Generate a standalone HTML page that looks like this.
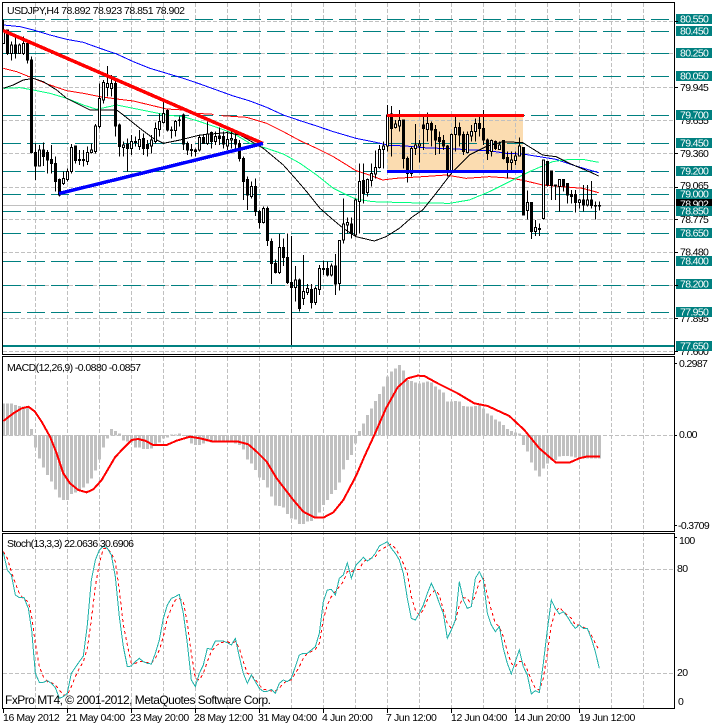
<!DOCTYPE html>
<html>
<head>
<meta charset="utf-8">
<style>
html,body{margin:0;padding:0;background:#fff;width:712px;height:725px;overflow:hidden}
svg{display:block}
text{font-family:"Liberation Sans",sans-serif;font-size:10.5px;fill:#000}
.ax{letter-spacing:-.65px}
.lb{letter-spacing:-.65px;fill:#fff}
.dt{letter-spacing:-.4px}
.tl{stroke:#008080;stroke-width:1;stroke-dasharray:18 6;fill:none}
.w{stroke:#000;stroke-width:3;fill:none}
.bk{stroke:#000;stroke-width:3;fill:#000}
.wh{stroke:#000;stroke-width:3;fill:#fff}
.ma{fill:none;stroke-width:3;stroke-linejoin:round;shape-rendering:crispEdges}
</style>
</head>
<body>
<svg width="712" height="725" viewBox="0 0 712 725" xmlns="http://www.w3.org/2000/svg">
<rect width="712" height="725" fill="#fff"/>

<!-- orange rectangle -->
<rect x="387" y="115" width="136" height="56" fill="#fbdcb0"/>

<!-- grid -->
<g shape-rendering="crispEdges" fill="none" stroke="#c0c0c0" stroke-dasharray="4 2">
<path d="M35.5 3V708M67.5 3V708M99.5 3V708M131.5 3V708M163.5 3V708M195.5 3V708M227.5 3V708M259.5 3V708M291.5 3V708M323.5 3V708M355.5 3V708M387.5 3V708M419.5 3V708M451.5 3V708M483.5 3V708M515.5 3V708M547.5 3V708M579.5 3V708M611.5 3V708M643.5 3V708"/>
<path d="M3 21.5H674M3 53.5H674M3 87.5H674M3 120.5H674M3 153.5H674M3 187.5H674M3 219.5H674M3 252.5H674M3 285.5H674M3 318.5H674M3 351.5H674M3 435.5H674M3 569.5H674M3 673.5H674"/>
</g>
<path d="M3 205.5H674" stroke="#c0c0c0" stroke-width="1" shape-rendering="crispEdges"/>

<!-- teal level lines -->
<g shape-rendering="crispEdges">
<path class="tl" d="M3 19.5H670M3 31.5H670M3 53.5H670M3 76.5H670M3 115.5H670M3 143.5H670M3 171.5H670M3 194.5H670M3 211.5H670M3 233.5H670M3 261.5H670M3 285.5H670M3 312.5H670"/>
<rect x="3" y="345" width="671" height="2" fill="#008080"/>
</g>

<!-- moving averages left -->
<g transform="scale(.33333)">
<polyline class="ma" stroke="#0000ff" points="10,75 60,80 100,90 150,105 200,118 250,127 300,145 350,162 400,185 450,205 500,220 550,235 600,252 650,270 700,288 750,303 800,322 850,345 900,362 950,378 1000,395 1068,415 1118,425 1168,436 1218,438 1268,443 1318,445 1368,447 1418,450 1468,452 1518,460 1568,462 1618,470 1668,478 1718,495 1768,510 1796,518"/>
<polyline class="ma" stroke="#ff0000" points="10,205 50,215 100,235 150,255 200,272 250,280 300,290 350,297 400,303 450,315 500,327 550,330 590,340 640,343"/>
<polyline class="ma" stroke="#ff0000" points="665,347 740,352 800,370 850,395 900,422 950,445 1000,470 1068,512 1108,525 1148,540 1188,535 1268,530 1338,525 1398,535 1468,530 1538,535 1578,543 1628,555 1688,560 1748,565 1796,578"/>
<polyline class="ma" stroke="#00ff7f" points="10,265 60,263 100,270 150,280 200,295 250,315 290,328 350,315 400,325 450,335 500,345 550,350 600,365 650,382 700,400 750,430 800,445 850,462 900,490 950,525 1000,565 1040,585 1068,597 1118,605 1218,608 1348,610 1408,600 1468,575 1538,540 1588,515 1658,485 1708,478 1748,478 1796,487"/>
<polyline class="ma" stroke="#000" points="10,265 40,255 70,240 100,235 130,245 170,270 200,295 240,315 270,330 350,330 370,345 420,385 460,415 490,430 540,420 600,405 680,398 720,405 790,445 850,495 890,540 920,575 960,625 1000,660 1030,685 1068,710 1123,723 1158,710 1198,685 1238,650 1268,630 1308,580 1358,515 1408,465 1458,440 1508,425 1568,428 1628,465 1668,470 1708,490 1768,515 1796,528"/>
</g>

<!-- candles left -->
<g transform="translate(.17,0) scale(.33333)" shape-rendering="crispEdges">
<path class="w" d="M10 60V130M22 90V165M34 125V182M46 110V175M58 130V160M70 110V165M82 120V190M94 170V460M106 430V540M118 435V500M130 428V498M142 450V520M154 435V520M166 470V575M178 535V590M190 515V555M202 505V545M214 432V520M226 436V490M238 450V495M250 450V500M262 440V495M274 430V460M286 372V460M298 250V385M310 240V310M322 198V290M334 225V290M346 240V410M358 370V470M370 425V470M382 415V515M394 405V465M406 410V440M418 390V450M430 400V465M442 420V470M454 405V460M466 368V430M478 340V410M490 305V370M502 328V395M514 380V415M526 360V410M538 350V380M550 340V450M562 425V465M574 432V470M586 445V470M598 405V455M610 405V430M622 365V435M634 395V445M646 395V435M658 382V435M670 395V445M682 395V450M694 390V445M706 395V450M718 420V485M730 470V600M742 530V630M754 545V595M766 535V648M778 630V685M790 620V670M802 620V738M814 715V852M826 778V820M838 702V822M850 715V798M862 700V852M874 708V1035M886 798V905M898 835V935M910 765V915M922 852V885M934 852V925M946 860V915M958 795V885M970 782V825M982 785V830M994 790V830M1006 762V885M1018 720V872M1030 595V730M1042 652V700M1054 652V715M1066 595V710"/>
<path class="bk" d="M19 90h6V160h-6zM43 135h6V160h-6zM79 130h6V180h-6zM91 180h6V458h-6zM103 458h6V498h-6zM127 450h6V470h-6zM139 458h6V480h-6zM151 478h6V490h-6zM163 490h6V545h-6zM175 538h6V585h-6zM223 438h6V482h-6zM235 478h6V482h-6zM247 478h6V482h-6zM343 250h6V378h-6zM355 375h6V440h-6zM379 432h6V445h-6zM427 416h6V445h-6zM439 434h6V445h-6zM499 332h6V390h-6zM511 390h6V392h-6zM547 345h6V432h-6zM559 430h6V450h-6zM571 448h6V452h-6zM583 450h6V455h-6zM607 412h6V430h-6zM631 398h6V425h-6zM655 408h6V415h-6zM667 410h6V432h-6zM703 418h6V432h-6zM715 430h6V475h-6zM727 475h6V545h-6zM739 538h6V585h-6zM763 560h6V635h-6zM775 635h6V668h-6zM799 625h6V722h-6zM811 725h6V790h-6zM823 790h6V818h-6zM847 742h6V772h-6zM859 772h6V848h-6zM871 848h6V862h-6zM895 840h6V925h-6zM931 868h6V908h-6zM967 805h6V808h-6zM979 805h6V825h-6zM1003 798h6V852h-6zM1051 672h6V700h-6z"/>
<path class="wh" d="M7 90h6V130h-6zM31 135h6V160h-6zM55 135h6V160h-6zM67 130h6V160h-6zM115 450h6V498h-6zM187 535h6V550h-6zM199 514h6V538h-6zM211 442h6V514h-6zM259 458h6V485h-6zM271 450h6V458h-6zM283 378h6V455h-6zM295 295h6V380h-6zM307 248h6V300h-6zM319 250h6V262h-6zM331 250h6V265h-6zM367 435h6V442h-6zM391 424h6V445h-6zM403 424h6V428h-6zM415 418h6V440h-6zM451 420h6V438h-6zM463 385h6V425h-6zM475 365h6V388h-6zM487 340h6V368h-6zM523 365h6V392h-6zM535 360h6V362h-6zM595 412h6V450h-6zM619 402h6V430h-6zM643 410h6V425h-6zM679 418h6V438h-6zM691 415h6V420h-6zM751 560h6V590h-6zM787 625h6V668h-6zM835 742h6V818h-6zM883 840h6V862h-6zM907 875h6V895h-6zM919 865h6V878h-6zM943 865h6V908h-6zM955 805h6V868h-6zM991 798h6V825h-6zM1015 722h6V850h-6zM1027 672h6V720h-6zM1039 668h6V675h-6zM1063 600h6V705h-6z"/>
</g>

<!-- candles right -->
<g transform="translate(356.17,0) scale(.33333)" shape-rendering="crispEdges">
<path class="w" d="M10 490V700M22 490V610M34 535V590M46 490V560M58 452V535M70 435V505M82 425V505M94 315V455M106 318V470M118 360V385M130 330V395M142 358V505M154 470V548M166 440V530M178 372V465M190 420V488M202 350V450M214 338V425M226 365V440M238 375V465M250 395V462M262 405V450M274 435V530M286 400V522M298 348V455M310 368V440M322 395V465M334 395V460M346 375V425M358 355V425M370 350V410M382 330V435M394 415V480M406 418V470M418 422V450M430 425V450M442 420V478M454 455V535M466 455V515M478 455V495M490 412V470M502 442V645M514 572V658M526 608V717M538 660V708M550 670V708M562 478V658M574 485V560M586 513V600M598 555V600M610 538V635M622 538V575M634 550V610M646 570V610M658 570V638M670 597V625M682 555V635M694 555V620M706 543V625M718 605V658M730 605V632"/>
<path class="bk" d="M19 542h6V580h-6zM103 342h6V385h-6zM139 360h6V475h-6zM151 475h6V520h-6zM199 375h6V385h-6zM223 370h6V390h-6zM235 388h6V420h-6zM247 412h6V425h-6zM259 422h6V438h-6zM271 438h6V518h-6zM307 382h6V405h-6zM319 403h6V455h-6zM367 370h6V385h-6zM379 385h6V420h-6zM391 420h6V460h-6zM415 425h6V445h-6zM439 422h6V475h-6zM451 472h6V488h-6zM499 442h6V645h-6zM523 608h6V695h-6zM547 685h6V688h-6zM571 485h6V555h-6zM583 513h6V557h-6zM595 555h6V558h-6zM619 538h6V558h-6zM631 550h6V585h-6zM643 583h6V590h-6zM655 583h6V608h-6zM679 600h6V615h-6zM703 600h6V617h-6zM715 616h6V618h-6zM727 616h6V618h-6z"/>
<path class="wh" d="M7 545h6V605h-6zM31 538h6V578h-6zM43 520h6V542h-6zM55 502h6V522h-6zM67 448h6V502h-6zM79 438h6V448h-6zM91 345h6V438h-6zM115 372h6V382h-6zM127 362h6V378h-6zM163 445h6V520h-6zM175 435h6V445h-6zM187 432h6V438h-6zM211 370h6V388h-6zM283 403h6V518h-6zM295 382h6V403h-6zM331 403h6V458h-6zM343 395h6V408h-6zM355 370h6V395h-6zM403 422h6V455h-6zM427 435h6V448h-6zM463 480h6V488h-6zM475 468h6V482h-6zM487 438h6V468h-6zM511 608h6V632h-6zM535 682h6V695h-6zM559 480h6V655h-6zM607 538h6V560h-6zM667 600h6V608h-6zM691 600h6V615h-6z"/>
</g>

<!-- trend lines -->
<g fill="none" shape-rendering="crispEdges">
<path d="M3 30.5L263 143.5" stroke="#ff0000" stroke-width="3.5"/>
<path d="M59 193.5L263 143.5" stroke="#0000ff" stroke-width="3.5"/>
<rect x="387" y="114" width="137" height="3" fill="#ff0000" stroke="none"/>
<rect x="387" y="170" width="136" height="3" fill="#0000ff" stroke="none"/>
</g>

<!-- MACD histogram -->
<g transform="translate(.17,350) scale(.33333)" shape-rendering="crispEdges">
<path fill="none" stroke="#c0c0c0" stroke-width="9" d="M10 257V160M22 257V160M34 257V160M46 257V165M58 257V168M70 257V170M82 257V172M94 257V237M106 255V292M118 255V325M130 255V352M142 255V375M154 255V395M166 255V418M178 255V442M190 255V450M202 255V450M214 255V432M226 255V428M238 255V420M250 255V412M262 255V400M274 255V385M286 255V362M298 255V328M310 255V292M322 255V265M334 257V237M346 257V243M358 257V250M370 255V272M382 255V275M394 255V278M406 255V292M418 255V292M430 255V297M442 255V297M454 255V295M466 255V285M478 255V278M490 255V265M502 255V262M514 257V253M526 257V253M538 257V250M550 255V258M562 255V265M574 255V280M586 255V285M598 255V285M610 255V280M622 255V275M634 255V278M646 255V278M658 255V275M670 255V275M682 255V275M694 255V278M706 255V280M718 255V285M730 255V298M742 255V328M754 255V340M766 255V360M778 255V382M790 255V390M802 255V412M814 255V440M826 255V466M838 255V468M850 255V472M862 255V492M874 255V505M886 255V508M898 255V522M910 255V522M922 255V515M934 255V513M946 255V500M958 255V488M970 255V465M982 255V450M994 255V432M1006 255V420M1018 255V397M1030 255V358M1042 255V330M1054 255V315M1066 255V280"/>
<path fill="none" stroke="#c0c0c0" stroke-width="9" transform="translate(1068,0)" d="M10 257V243M22 257V220M34 257V195M46 257V175M58 257V153M70 257V132M82 257V110M94 257V80M106 257V65M118 257V55M130 257V45M142 257V62M154 257V90M166 257V93M178 257V97M190 257V100M202 257V98M214 257V95M226 257V98M238 257V110M250 257V118M262 257V128M274 257V155M286 257V155M298 257V153M310 257V155M322 257V168M334 257V170M346 257V170M358 257V168M370 257V165M382 257V175M394 257V190M406 257V197M418 257V208M430 257V215M442 257V225M454 257V237M466 257V243M478 257V248M490 257V250M502 255V285M514 255V305M526 255V338M538 255V362M550 255V380M562 255V355M574 255V340M586 255V330M598 255V330M610 255V320M622 255V318M634 255V318M646 255V320M658 255V322M670 255V322M682 255V325M694 255V325M706 255V325M718 255V325M730 255V325"/>
</g>
<g transform="translate(0,350) scale(.33333)">
<polyline class="ma" stroke="#ff0000" style="stroke-width:6" points="10,213 40,190 65,175 85,170 105,185 125,215 150,260 170,310 190,370 210,400 235,420 260,427 280,418 305,390 345,322 370,295 395,270 415,267 435,272 460,285 500,285 530,272 570,260 600,265 640,275 715,275 745,283 770,305 800,335 830,385 880,450 910,485 945,503 970,503 1000,487 1030,450 1068,378 1093,320 1123,255 1158,175 1193,112 1223,85 1253,77 1273,78 1313,100 1373,130 1423,160 1463,168 1528,198 1573,240 1618,295 1668,338 1708,338 1738,325 1758,320 1800,320"/>
</g>

<!-- Stochastic -->
<g transform="translate(0,530) scale(.33333)" shape-rendering="crispEdges">
<polyline fill="none" stroke="#ff0000" stroke-width="3" stroke-dasharray="9 9" points="10,65 22,85 34,125 46,160 58,190 72,208 85,215 95,260 106,340 118,410 130,440 142,455 154,458 166,465 178,480 190,495 202,495 214,470 226,440 238,415 250,395 262,355 274,270 286,170 298,100 310,55 322,55 334,70 346,95 358,180 370,285 382,345 394,400 406,400 418,395 430,395 442,398 454,400 466,385 478,360 490,320 502,265 514,235 526,210 538,205 550,215 562,280 574,370 586,445 598,450 610,430 622,395 634,365 646,350 660,338 682,335 694,340 706,335 718,355 730,395 742,430 754,435 766,448 778,465 790,478 802,480 814,483 826,483 838,475 850,460 862,452 874,450 886,430 898,410 910,385 922,370 934,365 946,358 958,340 970,270 982,225 994,200 1006,185 1018,170 1030,155 1042,125 1054,125 1068,118 1078,118 1090,95 1102,88 1114,85 1126,80 1138,62 1162,48 1174,42 1186,55 1198,75 1210,100 1222,130 1234,200 1246,240 1258,255 1270,240 1282,210 1294,190 1306,180 1318,195 1330,240 1342,280 1354,295 1366,275 1378,225 1390,203 1402,205 1414,225 1426,195 1438,155 1450,145 1462,195 1474,240 1486,280 1498,290 1510,320 1522,365 1534,400 1546,410 1558,395 1570,395 1582,420 1594,450 1606,475 1618,480 1630,445 1642,370 1654,285 1666,245 1678,232 1690,245 1702,255 1714,265 1726,285 1738,285 1750,292 1762,298 1774,315 1786,340 1798,362"/>
<polyline fill="none" stroke="#20b2aa" stroke-width="3" points="10,68 22,120 34,135 46,195 58,203 72,203 85,235 95,300 106,430 118,457 130,457 142,452 154,460 166,473 178,505 190,500 202,490 214,430 226,412 238,395 250,378 262,285 274,150 286,90 298,60 310,48 322,55 334,75 346,140 358,260 370,350 382,410 394,408 406,395 418,385 430,395 442,400 454,402 466,370 478,330 490,265 502,225 514,205 526,200 538,193 550,250 562,340 574,450 586,470 598,430 610,405 622,355 634,358 646,333 670,333 682,338 694,345 706,325 718,380 730,430 742,460 754,435 766,455 778,475 790,484 802,484 814,478 826,490 838,460 850,450 862,455 874,445 886,410 898,375 910,370 922,370 934,360 946,350 958,310 970,215 982,180 994,178 1006,195 1018,145 1030,135 1042,98 1054,145 1068,105 1078,95 1090,82 1102,93 1114,85 1126,70 1138,48 1162,35 1174,55 1186,70 1198,90 1210,130 1222,205 1234,265 1246,270 1258,250 1270,225 1282,190 1294,160 1306,185 1318,220 1330,250 1342,325 1354,300 1366,270 1378,155 1390,210 1402,235 1414,230 1426,145 1438,125 1450,150 1462,250 1474,285 1486,305 1498,290 1510,355 1522,400 1534,432 1546,395 1558,360 1570,410 1582,435 1594,492 1606,482 1618,488 1630,400 1642,300 1654,210 1666,235 1678,252 1690,245 1702,260 1714,280 1726,295 1738,285 1750,295 1762,295 1774,325 1786,365 1798,415"/>
</g>

<!-- axis labels -->
<g>
<text class="ax" x="680" y="91">79.945</text>
<text class="ax" x="680" y="124">79.655</text>
<text class="ax" x="680" y="157">79.360</text>
<text class="ax" x="680" y="189">79.065</text>
<text class="ax" x="680" y="223">78.775</text>
<text class="ax" x="680" y="255.500">78.480</text>
<text class="ax" x="680" y="289">78.190</text>
<text class="ax" x="680" y="322">77.895</text>
<text class="ax" x="680" y="355">77.600</text>
<text class="ax" x="679" y="367">0.2987</text>
<text class="ax" x="679" y="438">0.00</text>
<text class="ax" x="678" y="529">-0.3709</text>
<text class="ax" x="679" y="544">100</text>
<text class="ax" x="677" y="572">80</text>
<text class="ax" x="677" y="676">20</text>
<text class="ax" x="678" y="705">0</text>
</g>
<rect x="676" y="199" width="36" height="10" fill="#000"/>
<text class="lb" x="680" y="207.500">78.902</text>

<g fill="#008080" shape-rendering="crispEdges">
<rect x="676" y="14" width="36" height="10"/>
<rect x="676" y="26" width="36" height="10"/>
<rect x="676" y="48" width="36" height="10"/>
<rect x="676" y="71" width="36" height="10"/>
<rect x="676" y="110" width="36" height="10"/>
<rect x="676" y="138" width="36" height="10"/>
<rect x="676" y="166" width="36" height="10"/>
<rect x="676" y="189" width="36" height="10"/>
<rect x="676" y="206" width="36" height="10"/>
<rect x="676" y="228" width="36" height="10"/>
<rect x="676" y="256" width="36" height="10"/>
<rect x="676" y="279" width="36" height="10"/>
<rect x="676" y="307" width="36" height="10"/>
<rect x="676" y="341" width="36" height="10"/>
</g>
<text class="lb" x="680" y="22.500">80.550</text>
<text class="lb" x="680" y="34.500">80.450</text>
<text class="lb" x="680" y="56.500">80.250</text>
<text class="lb" x="680" y="79.500">80.050</text>
<text class="lb" x="680" y="118.500">79.700</text>
<text class="lb" x="680" y="146.500">79.450</text>
<text class="lb" x="680" y="174.500">79.200</text>
<text class="lb" x="680" y="197.500">79.000</text>
<text class="lb" x="680" y="214.500">78.850</text>
<text class="lb" x="680" y="236.500">78.650</text>
<text class="lb" x="680" y="264.500">78.400</text>
<text class="lb" x="680" y="287.500">78.200</text>
<text class="lb" x="680" y="315.500">77.950</text>
<text class="lb" x="680" y="349.500">77.650</text>

<!-- frames and ticks -->
<g fill="none" stroke="#000" stroke-width="1" shape-rendering="crispEdges">
<rect x="2.500" y="2.500" width="672" height="352"/>
<rect x="2.500" y="356.500" width="672" height="175"/>
<rect x="2.500" y="533.500" width="672" height="175"/>
<path d="M675 21.500h3M675 87.500h3M675 153.500h3M675 187.500h3M675 219.500h3M675 252.500h3M675 285.500h3M675 318.500h3M675 351.500h3M675 363.500h2M675 435.500h2M675 525.500h2M675 537.500h2"/>
<path d="M3.500 709v4M67.500 709v4M131.500 709v4M195.500 709v4M259.500 709v4M323.500 709v4M387.500 709v4M451.500 709v4M515.500 709v4M579.500 709v4"/>
</g>

<!-- text -->
<text x="7" y="14" textLength="178" lengthAdjust="spacing">USDJPY,H4  78.892 78.923 78.851 78.902</text>
<text x="7" y="371" textLength="134" lengthAdjust="spacing">MACD(12,26,9) -0.0880 -0.0857</text>
<text x="7" y="547" textLength="127" lengthAdjust="spacing">Stoch(13,3,3) 22.0636 30.6906</text>
<text x="5" y="704" style="font-size:12px" textLength="266" lengthAdjust="spacing">FxPro MT4, © 2001-2012, MetaQuotes Software Corp.</text>

<text class="dt" x="3" y="721">16 May 2012</text>
<text class="dt" x="66" y="721">21 May 04:00</text>
<text class="dt" x="130" y="721">23 May 20:00</text>
<text class="dt" x="194" y="721">28 May 12:00</text>
<text class="dt" x="258" y="721">31 May 04:00</text>
<text class="dt" x="322" y="721">4 Jun 20:00</text>
<text class="dt" x="386" y="721">7 Jun 12:00</text>
<text class="dt" x="451" y="721">12 Jun 04:00</text>
<text class="dt" x="514" y="721">14 Jun 20:00</text>
<text class="dt" x="579" y="721">19 Jun 12:00</text>
</svg>
</body>
</html>
